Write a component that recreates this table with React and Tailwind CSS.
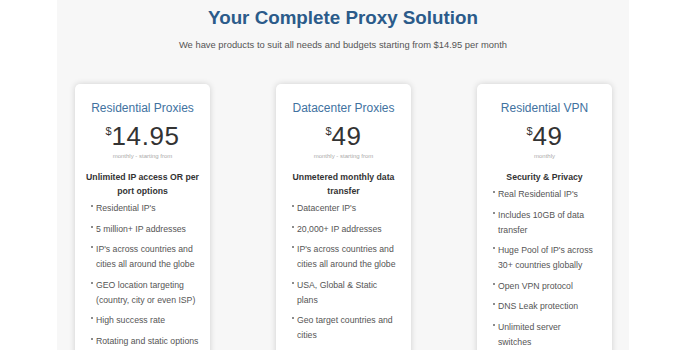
const plans = [
  {
    name: "Residential Proxies",
    price: "14.95",
    note: "monthly - starting from",
    heading: ["Unlimited IP access OR per", "port options"],
    items: [
      ["Residential IP's"],
      ["5 million+ IP addresses"],
      ["IP's across countries and", "cities all around the globe"],
      ["GEO location targeting", "(country, city or even ISP)"],
      ["High success rate"],
      ["Rotating and static options"],
    ],
  },
  {
    name: "Datacenter Proxies",
    price: "49",
    note: "monthly - starting from",
    heading: ["Unmetered monthly data", "transfer"],
    items: [
      ["Datacenter IP's"],
      ["20,000+ IP addresses"],
      ["IP's across countries and", "cities all around the globe"],
      ["USA, Global & Static", "plans"],
      ["Geo target countries and", "cities"],
      ["High speed and 99.9% uptime"],
    ],
  },
  {
    name: "Residential VPN",
    price: "49",
    note: "monthly",
    heading: ["Security & Privacy"],
    items: [
      ["Real Residential IP's"],
      ["Includes 10GB of data", "transfer"],
      ["Huge Pool of IP's across", "30+ countries globally"],
      ["Open VPN protocol"],
      ["DNS Leak protection"],
      ["Unlimited server", "switches"],
    ],
  },
];

export default function App() {
  return (
    <div className="h-[350px] w-[688px] overflow-hidden bg-white font-['Liberation_Sans',Arial,sans-serif]">
      <div className="ml-[57px] h-full w-[572px] bg-[#f7f7f7] pt-[6px]">
        <h1 className="text-center text-[18.8px] font-bold leading-[24px] text-[#2b5b8a]">
          Your Complete Proxy Solution
        </h1>
        <p className="mt-[9px] text-center text-[9.4px] leading-[12px] text-[#555]">
          We have products to suit all needs and budgets starting from $14.95 per month
        </p>

        <div className="mt-[33px] grid grid-cols-[135px_135px_135px] gap-x-[66px] px-[18px]">
          {plans.map((plan) => (
            <PlanCard key={plan.name} plan={plan} />
          ))}
        </div>
      </div>
    </div>
  );
}

function PlanCard({ plan }) {
  return (
    <div className="h-[300px] rounded-[5px] bg-white pt-[16px] shadow-[0_0_6px_rgba(0,0,0,0.16)]">
      <h2 className="text-center text-[12px] leading-[16px] text-[#41729f]">
        {plan.name}
      </h2>

      {/* price */}
      <div className="mt-[5px] flex justify-center text-[#333]">
        <span className="mt-[4px] text-[11px] leading-[12px]">$</span>
        <span className="text-[26px] leading-[30px] tracking-[0.6px]">
          {plan.price}
        </span>
      </div>
      <p className="mt-[1px] text-center text-[6px] leading-[8px] text-[#aaa]">
        {plan.note}
      </p>

      <p className="mt-[10px] text-center text-[8.7px] font-bold leading-[14px] text-[#333]">
        {plan.heading.map((line, i) => (
          <span key={i} className="block whitespace-nowrap">
            {line}
          </span>
        ))}
      </p>

      <ul className="mt-[3px] flex flex-col gap-[5.5px] pl-[16px] text-[8.7px] leading-[15px] text-[#555]">
        {plan.items.map((lines, i) => (
          <li key={i} className="flex gap-[3px]">
            <span className="mt-[4px] h-[2px] w-[2px] shrink-0 rounded-full bg-[#666]" />
            <span>
              {lines.map((line, j) => (
                <span key={j} className="block whitespace-nowrap">
                  {line}
                </span>
              ))}
            </span>
          </li>
        ))}
      </ul>
    </div>
  );
}
